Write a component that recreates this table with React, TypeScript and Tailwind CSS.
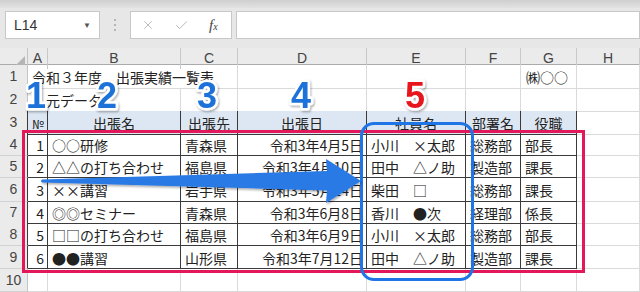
import { X, Check } from 'lucide-react';

// Sheet rows: number, height class, and cell texts for columns A..H
interface SheetRow {
    n: number;
    h: string;
    cells: string[];
}

const jp = "font-['Noto_Sans_CJK_JP','Noto_Sans',sans-serif]";
const ui = "font-['Liberation_Sans',Arial,sans-serif]";

const LIGHT = 'border-r border-b border-[#dadada]';
const DARK = 'border-r border-b border-[#3a3a3a]';
const TOP_EDGE = 'border-r border-b border-r-[#dadada] border-b-[#3a3a3a]';

const columns = ['A', 'B', 'C', 'D', 'E', 'F', 'G', 'H'];

const dataRows: SheetRow[] = [
    { n: 4, h: 'h-[23px]', cells: ['1', '○○研修', '青森県', '令和3年4月5日', '小川　×太郎', '総務部', '部長', ''] },
    { n: 5, h: 'h-[22px]', cells: ['2', '△△の打ち合わせ', '福島県', '令和3年4月10日', '田中　△ノ助', '製造部', '課長', ''] },
    { n: 6, h: 'h-[24px]', cells: ['3', '××講習', '岩手県', '令和3年5月14日', '柴田　□', '総務部', '課長', ''] },
    { n: 7, h: 'h-[21px]', cells: ['4', '◎◎セミナー', '青森県', '令和3年6月8日', '香川　●次', '経理部', '係長', ''] },
    { n: 8, h: 'h-[23px]', cells: ['5', '□□の打ち合わせ', '福島県', '令和3年6月9日', '小川　×太郎', '総務部', '部長', ''] },
    { n: 9, h: 'h-[23px]', cells: ['6', '●●講習', '山形県', '令和3年7月12日', '田中　△ノ助', '製造部', '課長', ''] },
];

const headers = ['№', '出張名', '出張先', '出張日', '社員名', '部署名', '役職'];

const GRID = 'grid grid-cols-[28px_20px_133px_57px_129px_99px_55px_56px_63px]';

function RowHead({ n, dark }: { n: number; dark?: boolean }) {
    return (
        <div
            className={`flex items-center justify-center bg-[#ebebeb] text-[14px] text-[#444] border-b border-b-[#d2d2d2] border-r ${dark ? 'border-r-[#3a3a3a]' : 'border-r-[#c4c4c4]'} ${ui}`}
        >
            {n}
        </div>
    );
}

function Toolbar() {
    return (
        <div className="h-[48px] bg-[#e7e7e7]">
            <div className="h-[8px] bg-gradient-to-b from-[#cfcfcf] to-[#e2e2e2]" />
            <div className="flex items-center pt-[3px] pl-[5px]">
                <div className="w-[95px] h-[28px] bg-white border border-[#c8c8c8] flex items-center justify-between pl-[8px] pr-[8px]">
                    <span className={`text-[14px] text-[#333] ${ui}`}>L14</span>
                    <span className="text-[8px] text-[#555]">▼</span>
                </div>
                <div className="w-[30px] flex flex-col items-center gap-[3px]">
                    <span className="w-[2px] h-[2px] rounded-full bg-[#a5a5a5]" />
                    <span className="w-[2px] h-[2px] rounded-full bg-[#a5a5a5]" />
                    <span className="w-[2px] h-[2px] rounded-full bg-[#a5a5a5]" />
                </div>
                <div className="w-[102px] h-[28px] bg-white border border-[#c8c8c8] flex items-center">
                    <X className="w-[14px] h-[14px] ml-[10px] text-[#b3b3b3]" strokeWidth={1.5} />
                    <Check className="w-[15px] h-[15px] ml-[19px] text-[#b3b3b3]" strokeWidth={1.5} />
                    <span className="ml-[20px] text-[15px] italic text-[#444] font-['Liberation_Serif',serif]">
                        f<span className="text-[10px]">x</span>
                    </span>
                </div>
                <div className="flex-1 h-[28px] ml-[4px] bg-white border border-[#c8c8c8]" />
            </div>
        </div>
    );
}

function Sheet() {
    return (
        <div className="text-[#222]">
            {/* column letters */}
            <div className={`${GRID} h-[17px] bg-[#ebebeb] border-b border-[#ababab]`}>
                <div className="flex items-end justify-end pr-[2px] pb-[2px] border-r border-[#c4c4c4]">
                    <svg width="11" height="11" viewBox="0 0 11 11">
                        <path d="M11 0 L11 11 L0 11 Z" fill="#b5b5b5" />
                    </svg>
                </div>
                {columns.map((c) => (
                    <div
                        key={c}
                        className={`flex items-center justify-center text-[14px] text-[#444] border-r border-[#c8c8c8] ${ui}`}
                    >
                        {c}
                    </div>
                ))}
            </div>

            {/* row 1: title */}
            <div className={`${GRID} h-[23px] ${jp} text-[14px]`}>
                <RowHead n={1} />
                <div className={`col-span-3 flex items-center pt-[2px] pl-[4px] whitespace-nowrap ${LIGHT}`}>
                    令和３年度　出張実績一覧表
                </div>
                <div className={LIGHT} />
                <div className={LIGHT} />
                <div className={LIGHT} />
                <div className={`flex items-center pt-[2px] pl-[5px] ${LIGHT}`}>㈱○○</div>
                <div className={LIGHT} />
            </div>

            {/* row 2: source label */}
            <div className={`${GRID} h-[23px] ${jp} text-[14px]`}>
                <RowHead n={2} />
                <div className={`col-span-2 flex items-center pt-[2px] pl-[18px] whitespace-nowrap ${TOP_EDGE}`}>
                    元データ
                </div>
                <div className={TOP_EDGE} />
                <div className={TOP_EDGE} />
                <div className={TOP_EDGE} />
                <div className={TOP_EDGE} />
                <div className={TOP_EDGE} />
                <div className={LIGHT} />
            </div>

            {/* row 3: table header */}
            <div className={`${GRID} h-[22px] ${jp} text-[14px]`}>
                <RowHead n={3} dark />
                {headers.map((h, i) => (
                    <div
                        key={h}
                        className={`flex items-center pt-[2px] bg-[#dde7f3] ${DARK} ${i === 0 ? 'justify-start pl-[4px] text-[12px]' : 'justify-center'}`}
                    >
                        {h}
                    </div>
                ))}
                <div className={LIGHT} />
            </div>

            {dataRows.map((r) => (
                <div key={r.n} className={`${GRID} ${r.h} ${jp} text-[14px]`}>
                    <RowHead n={r.n} dark />
                    {r.cells.map((t, i) => {
                        const right = i === 0 || i === 3;
                        return (
                            <div
                                key={i}
                                className={`flex items-center pt-[2px] whitespace-nowrap overflow-hidden ${i === 7 ? LIGHT : DARK} ${right ? 'justify-end pr-[3px]' : 'justify-start pl-[4px]'}`}
                            >
                                {t}
                            </div>
                        );
                    })}
                </div>
            ))}

            <div className={`${GRID} h-[23px]`}>
                <RowHead n={10} />
                {columns.map((c) => (
                    <div key={c} className={LIGHT} />
                ))}
            </div>
        </div>
    );
}

function Callouts() {
    const label = {
        fontFamily: "'Liberation Sans', Arial, sans-serif",
        fontWeight: 700,
        fontSize: 36,
        stroke: '#ffffff',
        strokeWidth: 5,
        strokeLinejoin: 'round' as const,
        paintOrder: 'stroke',
    };
    return (
        <>
            <div className="absolute left-[22px] top-[130px] w-[563px] h-[143px] border-[3px] border-[#e2185b]" />
            <div className="absolute left-[360px] top-[122px] w-[114px] h-[159px] border-[3px] border-[#1f74e6] rounded-[14px]" />
            <svg className="absolute left-0 top-0" width="640" height="292" viewBox="0 0 640 292">
                <defs>
                    <filter id="soft" x="-10%" y="-30%" width="120%" height="160%">
                        <feDropShadow dx="1" dy="1.5" stdDeviation="1.2" floodColor="#000" floodOpacity="0.35" />
                    </filter>
                </defs>
                <path
                    d="M42 179.5 L327 171 L326 159 L361 181 L326 203 L327 190.5 L42 182.5 Q40 181 42 179.5 Z"
                    fill="#2a7ae6"
                    filter="url(#soft)"
                />
                <g filter="url(#soft)">
                    <text x="36" y="108" textAnchor="middle" fill="#1f72d8" style={label}>1</text>
                    <text x="107" y="108" textAnchor="middle" fill="#1f72d8" style={label}>2</text>
                    <text x="207" y="108" textAnchor="middle" fill="#1f72d8" style={label}>3</text>
                    <text x="301" y="108" textAnchor="middle" fill="#1f72d8" style={label}>4</text>
                    <text x="415" y="108" textAnchor="middle" fill="#e8141e" style={label}>5</text>
                </g>
            </svg>
        </>
    );
}

export default function App() {
    return (
        <div className="relative w-[640px] h-[292px] overflow-hidden bg-white">
            <Toolbar />
            <Sheet />
            <Callouts />
        </div>
    );
}
